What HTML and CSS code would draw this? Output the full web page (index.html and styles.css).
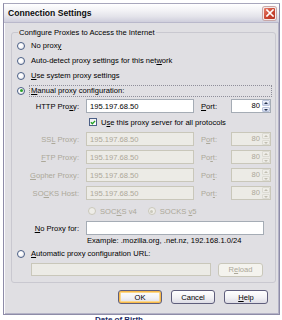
FILE: index.html
```html
<!DOCTYPE html>
<html>
<head>
<meta charset="utf-8">
<link rel="stylesheet" href="styles.css">
</head>
<body>
<div class="win">
  <div class="titlebar">
    <span class="title">Connection Settings</span>
    <span class="close"><svg width="8" height="8" viewBox="0 0 8 8"><path d="M1 1 L7 7 M7 1 L1 7" stroke="#fff" stroke-width="1.6" stroke-linecap="square"/></svg></span>
  </div>
  <div class="content">
    <fieldset class="group">
      <legend>Configure Proxies to Access the Internet</legend>
      <div class="opt"><span class="radio"></span><span>No prox<u>y</u></span></div>
      <div class="opt"><span class="radio"></span><span>Auto-detect proxy settings for this net<u>w</u>ork</span></div>
      <div class="opt"><span class="radio"></span><span><u>U</u>se system proxy settings</span></div>
      <div class="opt"><span class="radio on"></span><span class="focus"><u>M</u>anual proxy configuration:</span></div>

      <div class="prow first">
        <span class="lbl">HTTP Pro<u>x</u>y:</span>
        <span class="field">195.197.68.50</span>
        <span class="plbl"><u>P</u>ort:</span>
        <span class="spin"><span class="num">80</span><span class="arrows"><i class="up"></i><i class="dn"></i></span></span>
      </div>
      <div class="crow"><span class="check"><svg width="7" height="7" viewBox="0 0 7 7"><path d="M1 3.2 L2.8 5 L6 1.6" fill="none" stroke="#21a121" stroke-width="1.5"/></svg></span><span>U<u>s</u>e this proxy server for all protocols</span></div>

      <div class="prow dis">
        <span class="lbl">SS<u>L</u> Proxy:</span>
        <span class="field">195.197.68.50</span>
        <span class="plbl">P<u>o</u>rt:</span>
        <span class="spin"><span class="num">80</span><span class="arrows"><i class="up"></i><i class="dn"></i></span></span>
      </div>
      <div class="prow dis">
        <span class="lbl"><u>F</u>TP Proxy:</span>
        <span class="field">195.197.68.50</span>
        <span class="plbl">Po<u>r</u>t:</span>
        <span class="spin"><span class="num">80</span><span class="arrows"><i class="up"></i><i class="dn"></i></span></span>
      </div>
      <div class="prow dis">
        <span class="lbl"><u>G</u>opher Proxy:</span>
        <span class="field">195.197.68.50</span>
        <span class="plbl">Por<u>t</u>:</span>
        <span class="spin"><span class="num">80</span><span class="arrows"><i class="up"></i><i class="dn"></i></span></span>
      </div>
      <div class="prow dis">
        <span class="lbl">SO<u>C</u>KS Host:</span>
        <span class="field">195.197.68.50</span>
        <span class="plbl">Por<u>t</u>:</span>
        <span class="spin"><span class="num">80</span><span class="arrows"><i class="up"></i><i class="dn"></i></span></span>
      </div>
      <div class="vrow dis">
        <span class="vopt"><span class="radio"></span><span>SOC<u>K</u>S v4</span></span>
        <span class="vopt"><span class="radio on"></span><span>SOCKS <u>v</u>5</span></span>
      </div>
      <div class="nrow">
        <span class="lbl"><u>N</u>o Proxy for:</span>
        <span class="field wide"></span>
      </div>
      <div class="example">Example: .mozilla.org, .net.nz, 192.168.1.0/24</div>
      <div class="opt auto"><span class="radio"></span><span><u>A</u>utomatic proxy configuration URL:</span></div>
      <div class="urow">
        <span class="field url"></span>
        <span class="btn disabled">R<u>e</u>load</span>
      </div>
    </fieldset>
    <div class="buttons">
      <span class="btn default">OK</span>
      <span class="btn">Cancel</span>
      <span class="btn"><u>H</u>elp</span>
    </div>
  </div>
</div>
<div class="below">Date of Birth</div>
</body>
</html>
```
FILE: styles.css
```css
html, body {
  margin: 0;
  padding: 0;
  background: #ffffff;
  width: 282px;
  height: 320px;
  overflow: hidden;
}
body {
  font-family: "Liberation Sans", Arial, sans-serif;
  font-size: 7.6px;
  color: #000;
}
u { text-decoration: underline; text-underline-offset: 1px; }

.win {
  margin: 3px 0 0 3px;
  width: 277px;
  height: 312px;
  box-sizing: border-box;
  border: 1px solid #8e8ca8;
  border-top-color: #a8a7bc;
  background: #e0dfe3;
  box-shadow: inset 1px 0 0 #fbfbfd, inset -1px 0 0 #b4b3c6, inset 0 -1px 0 #b4b3c6;
  display: flex;
  flex-direction: column;
}
.titlebar {
  height: 18px;
  flex: none;
  display: flex;
  align-items: center;
  justify-content: space-between;
  padding: 0 3px 0 4px;
  background: linear-gradient(#ffffff 0%, #f3f3f6 35%, #e3e3ea 70%, #cfcedc 100%);
  border-bottom: 1px solid #b9b8cb;
}
.title {
  font-weight: bold;
  font-size: 8.6px;
  color: #0e0e0e;
}
.close {
  width: 13px;
  height: 13px;
  box-sizing: border-box;
  border: 1px solid #f4e9e9;
  border-radius: 2px;
  background: linear-gradient(135deg, #e8806e, #c9442f 55%, #b63526);
  display: flex;
  align-items: center;
  justify-content: center;
  box-shadow: 0 0 0 1px #c9a7a7;
}

.content {
  flex: 1;
  padding: 5px 0 0 7px;
}
.group {
  margin: 0;
  width: 258px;
  box-sizing: border-box;
  border: 1px solid #c9c8d0;
  border-radius: 3px;
  padding: 1px 4px 4px 5px;
}
.group legend {
  padding: 0 1px;
  margin-left: 1px;
  line-height: 9px;
}

.opt {
  height: 15px;
  display: flex;
  align-items: center;
  gap: 6px;
}
.radio {
  width: 8px;
  height: 8px;
  box-sizing: border-box;
  border-radius: 50%;
  border: 1px solid #4b5f86;
  background: radial-gradient(circle at 35% 35%, #ffffff 30%, #dcdce4 100%);
  display: inline-flex;
  align-items: center;
  justify-content: center;
  flex: none;
}
.radio.on::after {
  content: "";
  width: 3px;
  height: 3px;
  border-radius: 50%;
  background: #2ba12b;
}
.focus {
  flex: 1;
  margin-left: -1px;
  padding-left: 1px;
  margin-right: 0;
  outline: 1px dotted #8f8e9a;
  outline-offset: 0;
  line-height: 10px;
}

.prow {
  height: 18px;
  display: grid;
  grid-template-columns: 62px 108px 23px 40px;
  column-gap: 7px;
  align-items: center;
}
.prow.first { height: 16px; }
.lbl { text-align: right; }
.field {
  height: 14px;
  box-sizing: border-box;
  border: 1px solid #a5acb5;
  background: #fff;
  display: flex;
  align-items: center;
  padding-left: 3px;
}
.spin {
  height: 14px;
  box-sizing: border-box;
  border: 1px solid #a5acb5;
  background: #fff;
  display: flex;
  align-items: stretch;
}
.num {
  flex: 1;
  text-align: right;
  padding-right: 2px;
  line-height: 12px;
}
.arrows {
  width: 8px;
  display: flex;
  flex-direction: column;
  gap: 1px;
  padding: 0;
}
.arrows i {
  flex: 1;
  background: linear-gradient(#f2f4fb, #c9d2ea);
  border: 1px solid #bac4dd;
  border-radius: 1px;
  position: relative;
}
.arrows i::after {
  content: "";
  position: absolute;
  left: 1px;
  top: 1px;
  border-left: 2px solid transparent;
  border-right: 2px solid transparent;
}
.arrows .up::after { border-bottom: 2px solid #27344e; }
.arrows .dn::after { border-top: 2px solid #27344e; }

.dis { color: #aca899; }
.dis .field, .dis .spin, .field.url {
  background: #ecebe6;
  border-color: #c9c7ba;
}
.dis .arrows i {
  background: #eeede8;
  border-color: #dcdbd3;
}
.dis .arrows .up::after { border-bottom-color: #c2bfb2; }
.dis .arrows .dn::after { border-top-color: #c2bfb2; }
.dis .radio {
  border-color: #cac8bb;
  background: #eeede8;
}
.dis .radio.on::after { background: #cac8bb; }

.crow {
  height: 16px;
  display: flex;
  align-items: center;
  gap: 4px;
  padding-left: 72px;
}
.check {
  width: 8px;
  height: 8px;
  box-sizing: border-box;
  border: 1px solid #4b5f86;
  background: linear-gradient(135deg, #ececf0, #ffffff);
  display: flex;
  align-items: center;
  justify-content: center;
}

.vrow {
  height: 18px;
  display: flex;
  align-items: center;
  padding-left: 71px;
  gap: 11px;
}
.vopt {
  display: flex;
  align-items: center;
  gap: 4px;
}

.nrow {
  height: 16px;
  display: grid;
  grid-template-columns: 62px 178px;
  column-gap: 7px;
  align-items: center;
}
.field.wide { height: 14px; }

.example {
  height: 10px;
  line-height: 10px;
  padding-left: 70px;
}
.opt.auto { height: 15px; }
.urow {
  height: 17px;
  display: flex;
  align-items: center;
  padding-left: 14px;
  gap: 7px;
}
.field.url {
  width: 180px;
  height: 13px;
}

.btn {
  height: 14px;
  box-sizing: border-box;
  display: flex;
  align-items: center;
  justify-content: center;
  border: 1px solid #5f5e7c;
  border-radius: 3px;
  background: linear-gradient(#ffffff, #f2f2f5 55%, #dddce5);
  color: #000;
}
.btn.disabled {
  width: 45px;
  border-color: #c9c7ba;
  background: #f4f3ee;
  color: #aca899;
}
.buttons {
  display: flex;
  justify-content: flex-end;
  gap: 9px;
  width: 257px;
  margin-top: 7px;
}
.buttons .btn { width: 44px; }
.btn.default {
  box-shadow: inset 0 0 0 1px #f7b94a, inset 0 0 0 2px #fbd88d;
}

.below {
  margin: 1px 0 0 95px;
  font-weight: bold;
  font-size: 8px;
  color: #1c2a66;
  line-height: 8px;
}
```
